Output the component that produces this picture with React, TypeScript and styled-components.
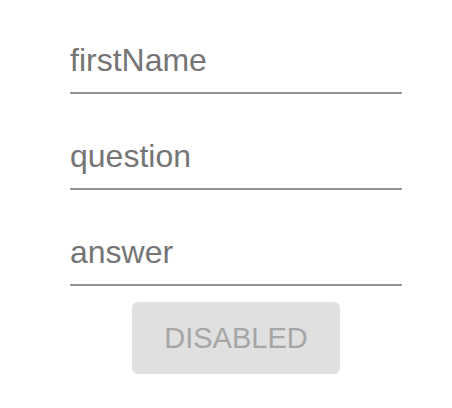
import React from "react";
import styled, { createGlobalStyle } from "styled-components";

const Global = createGlobalStyle`
  html, body { margin: 0; padding: 0; background: #ffffff; }
  body { font-family: "Liberation Sans", Arial, Helvetica, sans-serif; }
`;

const Form = styled.form`
  display: flex;
  flex-direction: column;
  width: 332px;
  margin-left: 70px;
  padding-top: 42px;
`;

const Input = styled.input`
  display: block;
  width: 100%;
  box-sizing: border-box;
  margin: 0 0 44px 0;
  padding: 0 0 13px 0;
  border: none;
  border-bottom: 2px solid #949494;
  outline: none;
  background: transparent;
  font-family: "Liberation Sans", Arial, Helvetica, sans-serif;
  font-size: 32px;
  line-height: normal;
  color: #212121;
  &::placeholder { color: #757575; opacity: 1; }
  &:last-of-type { margin-bottom: 16px; }
`;

const Button = styled.button`
  align-self: center;
  width: 208px;
  height: 72px;
  border: none;
  border-radius: 6px;
  background: #e0e0e0;
  color: #a6a6a6;
  font-family: "Liberation Sans", Arial, Helvetica, sans-serif;
  font-size: 29px;
  padding: 0;
  cursor: default;
`;

export default function App() {
  return (
    <>
      <Global />
      <Form onSubmit={(e) => e.preventDefault()}>
        <Input placeholder="firstName" />
        <Input placeholder="question" />
        <Input placeholder="answer" />
        <Button type="submit" disabled>DISABLED</Button>
      </Form>
    </>
  );
}
